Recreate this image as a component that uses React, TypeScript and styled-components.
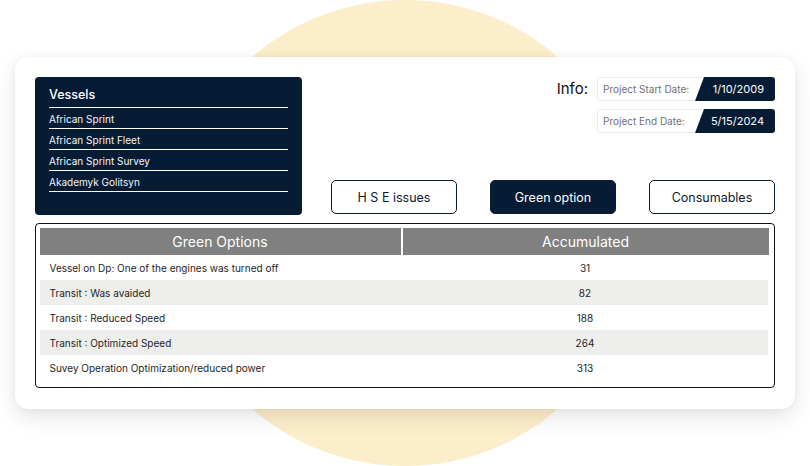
import React from "react";
import styled, { createGlobalStyle } from "styled-components";

const GlobalStyle = createGlobalStyle`
  html, body { margin: 0; padding: 0; background: #ffffff; }
  body { font-family: Inter, "Noto Sans", "Liberation Sans", sans-serif; }
  * { box-sizing: border-box; }
`;

const Stage = styled.div`
  width: 810px;
  height: 466px;
  padding: 57px 15px 0 15px;
  background: radial-gradient(circle at 405px 233px, #fdeecb 232.5px, #ffffff 233.5px);
  overflow: hidden;
`;

const Card = styled.div`
  width: 780px;
  height: 352px;
  background: #ffffff;
  border-radius: 14px;
  box-shadow: 0 8px 22px rgba(0, 0, 0, 0.11), 0 0 6px rgba(0, 0, 0, 0.04);
  padding: 20px 20px 0 20px;
  display: flex;
  flex-direction: column;
  gap: 8px;
`;

const Top = styled.div`
  display: flex;
  justify-content: space-between;
  height: 138px;
`;

const VesselPanel = styled.div`
  width: 267px;
  height: 138px;
  background: #061c35;
  border-radius: 4px;
  padding: 10px 14px 0 14px;
  color: #ffffff;
`;

const VesselTitle = styled.div`
  font-size: 12.5px;
  font-weight: 500;
  line-height: 16px;
  padding-bottom: 4px;
  border-bottom: 1px solid #ffffff;
`;

const VesselItem = styled.div`
  font-size: 10px;
  line-height: 20px;
  height: 21px;
  padding-top: 1px;
  border-bottom: 1px solid #ffffff;
  color: #f2f4f7;
`;

const RightCol = styled.div`
  display: flex;
  flex-direction: column;
  align-items: flex-end;
  justify-content: space-between;
  height: 137px;
`;

const InfoRow = styled.div`
  display: flex;
  gap: 9px;
  align-items: flex-start;
`;

const InfoLabel = styled.div`
  font-size: 15px;
  font-weight: 400;
  color: #111111;
  line-height: 24px;
`;

const DateList = styled.div`
  display: flex;
  flex-direction: column;
  gap: 8px;
`;

const DateBox = styled.div`
  width: 178px;
  height: 24px;
  display: flex;
  align-items: stretch;
  border: 1px solid #ececec;
  border-radius: 3px;
`;

const DateName = styled.div`
  flex: 1;
  font-size: 10px;
  color: #707070;
  padding-left: 5px;
  display: flex;
  align-items: center;
`;

const DateValue = styled.div`
  width: 80px;
  margin: -1px -1px -1px 0;
  background: #061c35;
  clip-path: polygon(9px 0, 100% 0, 100% 100%, 0 100%);
  border-radius: 0 3px 3px 0;
  color: #ffffff;
  font-size: 11px;
  display: flex;
  align-items: center;
  justify-content: flex-end;
  padding-right: 11px;
`;

const TabRow = styled.div`
  display: flex;
  gap: 33px;
`;

const Tab = styled.button<{ $active?: boolean }>`
  width: 126px;
  height: 34px;
  border: 1px solid #0b1a2e;
  border-radius: 5px;
  background: ${(p) => (p.$active ? "#061c35" : "#ffffff")};
  color: ${(p) => (p.$active ? "#ffffff" : "#0b1a33")};
  font-family: inherit;
  font-size: 12.5px;
  font-weight: 400;
  padding: 0;
  cursor: pointer;
`;

const TableBox = styled.div`
  width: 740px;
  height: 165px;
  border: 1.5px solid #111111;
  border-radius: 4px;
  padding: 3.5px 5.5px 0 3.5px;
`;

const HeaderRow = styled.div`
  display: grid;
  grid-template-columns: 361px 1fr;
  gap: 2px;
  height: 27px;
`;

const HeaderCell = styled.div`
  background: #808080;
  color: #ffffff;
  font-size: 14px;
  font-weight: 400;
  display: flex;
  align-items: center;
  justify-content: center;
`;

const Row = styled.div<{ $striped?: boolean }>`
  display: grid;
  grid-template-columns: 363px 1fr;
  height: 25px;
  padding-top: 1px;
  margin-right: 1px;
  background: ${(p) => (p.$striped ? "#eeeeec" : "#ffffff")};
  font-size: 10px;
  color: #1e1e1e;
`;

const NameCell = styled.div`
  display: flex;
  align-items: center;
  padding-left: 10px;
`;

const ValueCell = styled.div`
  display: flex;
  align-items: center;
  justify-content: center;
`;

const vessels = [
  "African Sprint",
  "African Sprint Fleet",
  "African Sprint Survey",
  "Akademyk Golitsyn",
];

const rows = [
  { name: "Vessel on Dp: One of the engines was turned off", value: 31 },
  { name: "Transit : Was avaided", value: 82 },
  { name: "Transit : Reduced Speed", value: 188 },
  { name: "Transit : Optimized Speed", value: 264 },
  { name: "Suvey Operation Optimization/reduced power", value: 313 },
];

export default function App() {
  return (
    <>
      <GlobalStyle />
      <Stage>
        <Card>
          <Top>
            <VesselPanel>
              <VesselTitle>Vessels</VesselTitle>
              {vessels.map((v) => (
                <VesselItem key={v}>{v}</VesselItem>
              ))}
            </VesselPanel>
            <RightCol>
              <InfoRow>
                <InfoLabel>Info:</InfoLabel>
                <DateList>
                  <DateBox>
                    <DateName>Project Start Date:</DateName>
                    <DateValue>1/10/2009</DateValue>
                  </DateBox>
                  <DateBox>
                    <DateName>Project End Date:</DateName>
                    <DateValue>5/15/2024</DateValue>
                  </DateBox>
                </DateList>
              </InfoRow>
              <TabRow>
                <Tab>H S E issues</Tab>
                <Tab $active>Green option</Tab>
                <Tab>Consumables</Tab>
              </TabRow>
            </RightCol>
          </Top>
          <TableBox>
            <HeaderRow>
              <HeaderCell>Green Options</HeaderCell>
              <HeaderCell>Accumulated</HeaderCell>
            </HeaderRow>
            {rows.map((r, i) => (
              <Row key={r.name} $striped={i % 2 === 1}>
                <NameCell>{r.name}</NameCell>
                <ValueCell>{r.value}</ValueCell>
              </Row>
            ))}
          </TableBox>
        </Card>
      </Stage>
    </>
  );
}
